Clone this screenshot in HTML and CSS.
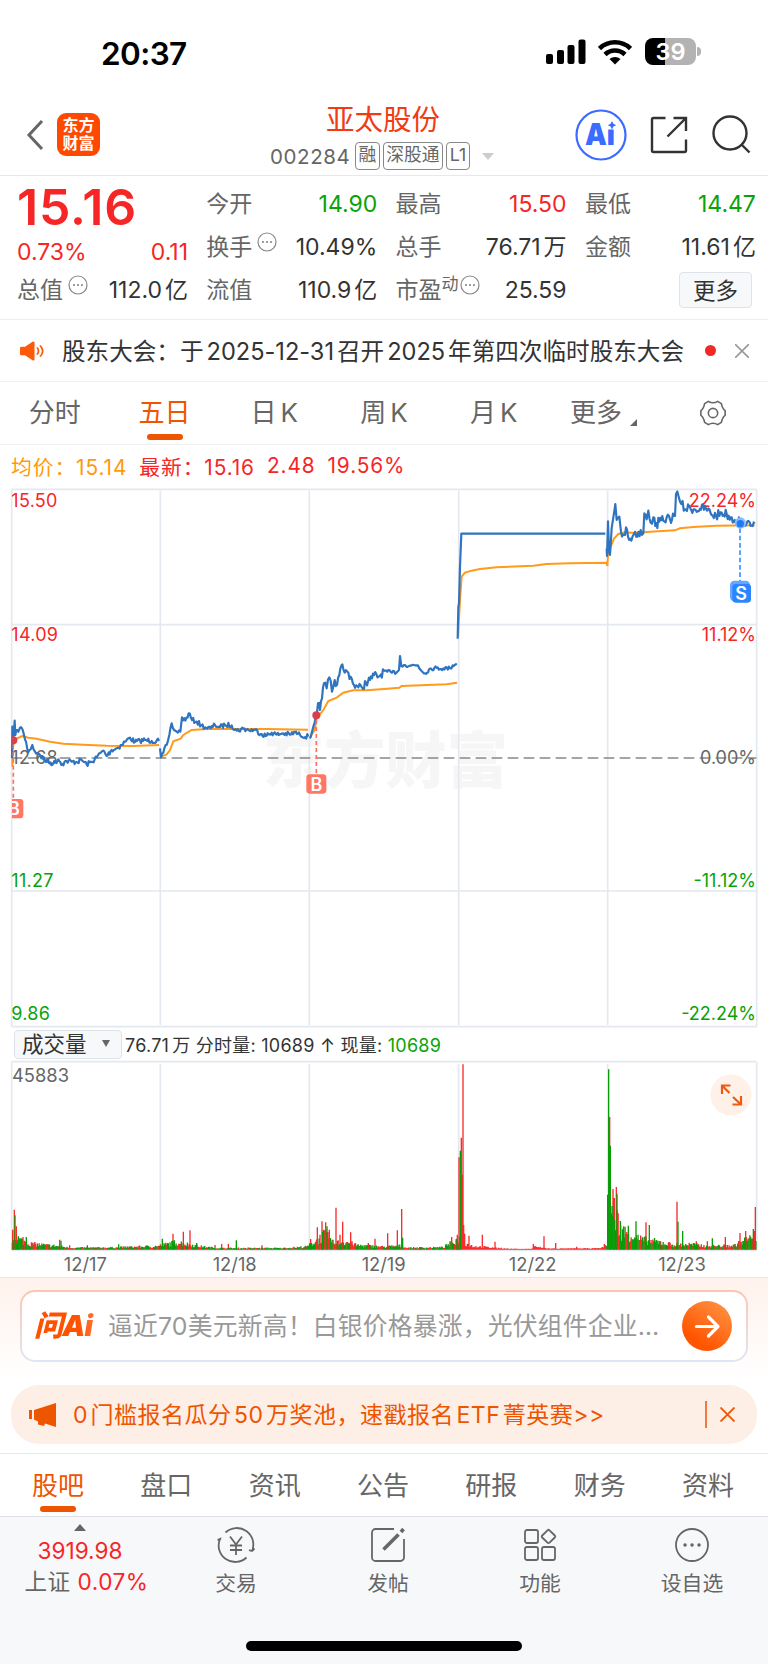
FILE: index.html
```html
<!DOCTYPE html>
<html lang="zh-CN">
<head>
  <meta charset="UTF-8" />
  <meta name="viewport" content="width=device-width, initial-scale=1.0"/>
  <title>亚太股份 002284</title>
  <link rel="stylesheet" href="styles.css">
</head>
<body>
  <!-- Status bar -->
  <div class="status">
    <span class="time">20:37</span>
    <div class="status-icons">
      <svg width="40" height="26" viewBox="0 0 40 26">
        <rect x="0" y="15" width="7" height="10" rx="2"/>
        <rect x="11" y="11" width="7" height="14" rx="2"/>
        <rect x="21.500" y="6" width="7" height="19" rx="2"/>
        <rect x="32.500" y="0.500" width="7" height="24.500" rx="2"/>
      </svg>
      <svg class="wifi" width="34" height="26" viewBox="0 0 34 26">
        <path d="M1.500 9.500a22.500 22.500 0 0 1 31 0M7 15.500a14.500 14.500 0 0 1 20 0" fill="none" stroke="#000" stroke-width="4.600"/>
        <path d="M11.500 20a8.500 8.500 0 0 1 11 0L17 25.500z"/>
      </svg>
      <div class="battery"><span>39</span></div>
      <i class="nub"></i>
    </div>
  </div>

  <!-- Header -->
  <header>
    <svg class="back" width="18" height="32" viewBox="0 0 18 32"><path d="M16 2L3 16l13 14" fill="none" stroke="#666" stroke-width="3"/></svg>
    <div class="logo">东方<br>财富</div>
    <div class="title">
      <h1>亚太股份</h1>
      <p><span class="code">002284</span><b>融</b><b>深股通</b><b>L1</b><i></i></p>
    </div>
    <div class="tools">
      <svg width="52" height="52" viewBox="0 0 52 52">
        <circle cx="26" cy="26" r="24.500" fill="#fff" stroke="#3b6bff" stroke-width="2.200"/>
        <text class="ai" x="10" y="36" textLength="30" lengthAdjust="spacingAndGlyphs">Ai</text>
        <path d="M31.500 10h12v10.500h-12z" fill="#fff"/>
        <path d="M37 12l1.400 2.800 2.800 1.400-2.800 1.400-1.400 2.800-1.400-2.800-2.800-1.400 2.800-1.400z" fill="#3b6bff"/>
      </svg>
      <svg width="38" height="38" viewBox="0 0 38 38" fill="none" stroke="#333" stroke-width="2.400">
        <path d="M15.500 2H3.500A1.500 1.500 0 0 0 2 3.500v31A1.500 1.500 0 0 0 3.500 36h31a1.500 1.500 0 0 0 1.500-1.500V23.500M23.500 2H36v13M36 2L17.500 20.500"/>
      </svg>
      <svg width="40" height="40" viewBox="0 0 40 40" fill="none" stroke="#333" stroke-width="2.400">
        <circle cx="19" cy="18" r="16.500"/><path d="M30.500 29.500l8 8"/>
      </svg>
    </div>
  </header>

  <!-- Quote -->
  <section class="quote">
    <div class="col first">
      <div class="price">15.16</div>
      <div class="row chg"><span class="red">0.73%</span><span class="red">0.11</span></div>
      <div class="row"><label>总值</label><svg class="more-dot" viewBox="0 0 20 20"><use href="#dots"/></svg><span>112.0<em>亿</em></span></div>
    </div>
    <div class="col">
      <div class="row"><label>今开</label><span class="green">14.90</span></div>
      <div class="row"><label>换手</label><svg class="more-dot" viewBox="0 0 20 20"><use href="#dots"/></svg><span>10.49%</span></div>
      <div class="row"><label>流值</label><span>110.9<em>亿</em></span></div>
    </div>
    <div class="col">
      <div class="row"><label>最高</label><span class="red">15.50</span></div>
      <div class="row"><label>总手</label><span>76.71<em>万</em></span></div>
      <div class="row"><label>市盈<sup>动</sup></label><svg class="more-dot near" viewBox="0 0 20 20"><use href="#dots"/></svg><span>25.59</span></div>
    </div>
    <div class="col">
      <div class="row"><label>最低</label><span class="green">14.47</span></div>
      <div class="row"><label>金额</label><span>11.61<em>亿</em></span></div>
      <div class="row"><button>更多</button></div>
    </div>
  </section>

  <svg class="defs" width="0" height="0">
    <g id="dots"><circle cx="10" cy="10" r="9" fill="none" stroke="#888" stroke-width="1.200"/>
    <circle cx="6" cy="10" r="1.100" fill="#888"/><circle cx="10" cy="10" r="1.100" fill="#888"/><circle cx="14" cy="10" r="1.100" fill="#888"/></g>
  </svg>

  <!-- Notice -->
  <div class="notice">
    <svg width="24" height="20" viewBox="0 0 24 28" preserveAspectRatio="none">
      <path d="M0 9.500Q0 8 1.500 8H5l7.500-7Q14.500 0 14.500 2v24q0 2-2 1L5 20H1.500Q0 20 0 18.500z" fill="#ff5a0a"/>
      <path d="M17 9q3 5 0 10M20 6q5.500 8 0 16" fill="none" stroke="#ff5a0a" stroke-width="1.800"/>
    </svg>
    <p>股东大会：于<span>2025-12-31</span>召开<span>2025</span>年第四次临时股东大会</p>
    <i class="dot"></i>
    <svg class="close" width="14" height="14" viewBox="0 0 14 14"><path d="M0 0l14 14M14 0L0 14" stroke="#999" stroke-width="1.600"/></svg>
  </div>

  <!-- Period tabs -->
  <nav class="periods">
    <a>分时</a><a class="active">五日</a><a>日<s>K</s></a><a>周<s>K</s></a><a>月<s>K</s></a><a class="tri">更多</a>
    <a><svg width="30" height="28" viewBox="0 0 30 30" fill="none" stroke="#666" stroke-width="1.700">
      <path d="M10 2.500Q15 5.500 20 2.500L24 5q1 5.500 4 7.500v5q-3 2-4 7.500l-4 2.500q-5-3-10 0L6 25q-1-5.500-4-7.500v-5Q5 10.500 6 5z" stroke-linejoin="round"/><circle cx="15" cy="15" r="5"/>
    </svg></a>
  </nav>

  <div class="legend">
    <span class="avg">均价：15.14</span><span class="red">最新：15.16</span><span class="red">2.48</span><span class="red">19.56%</span>
  </div>

  <!-- Price chart -->
  <svg class="chart" id="priceChart" width="768" height="549" viewBox="0 0 2304 1647">
    <text class="mark" x="788" y="908" textLength="736">东方财富</text>
    <g class="grid">
      <path d="M35 28H2269M35 434H2269M35 1233H2269M35 1640H2269M35 28V1640M2270 28V1640"/>
      <path d="M481 32V1635M928 32V1635M1376 32V1635M1823 32V1635"/>
    </g>
    <path d="M35 834H2269" stroke="#888" stroke-width="5" stroke-dasharray="32 16"/>
    <g class="labels">
      <text class="r" x="34" y="80">15.50</text>
      <text class="r" x="34" y="483">14.09</text>
      <text x="34" y="851">12.68</text>
      <text class="g" x="34" y="1221">11.27</text>
      <text class="g" x="34" y="1621">9.86</text>
    </g>
    <g class="labels end">
      <text class="r" x="2268" y="80">22.24%</text>
      <text class="r" x="2268" y="483">11.12%</text>
      <text x="2268" y="851">0.00%</text>
      <text class="g" x="2268" y="1221">-11.12%</text>
      <text class="g" x="2268" y="1621">-22.24%</text>
    </g>
    <g id="avgLines" fill="none" stroke="#ff9a1a" stroke-width="6"></g>
    <g id="priceLines" fill="none" stroke="#2f74c0" stroke-width="6.500" stroke-linejoin="round"></g>
    <svg x="36" y="0" width="2268" height="1647" viewBox="36 0 2268 1647">
      <circle cx="40" cy="781" r="12" fill="#d8404a"/>
      <path d="M40 794V958" stroke="#ff6f61" stroke-width="5" stroke-dasharray="12 9"/>
      <rect x="10" y="957" width="60" height="58" rx="10" fill="#ff7566"/>
      <text class="flag" x="42" y="1005">B</text>
    </svg>
    <circle cx="949" cy="706" r="12" fill="#d8404a"/>
    <path d="M949 720V884" stroke="#ff6f61" stroke-width="5" stroke-dasharray="12 9"/>
    <rect x="919" y="883" width="60" height="58" rx="10" fill="#ff7566"/>
    <text class="flag" x="949" y="932">B</text>
    <path d="M2220 145V305" stroke="#5aa3ff" stroke-width="6" stroke-dasharray="14 8"/>
    <circle cx="2221" cy="129" r="17" fill="#8abaff"/><circle cx="2221" cy="131" r="11" fill="#1e7bf5"/>
    <rect x="2190" y="302" width="60" height="62" rx="13" fill="#65a7ff"/>
    <rect x="2197" y="312" width="56" height="56" rx="10" fill="#2b85ff"/>
    <text class="flag" x="2223" y="361">S</text>
  </svg>

  <!-- Volume -->
  <div class="vol-head">
    <button>成交量<i></i></button>
    <span>76.71<em>万</em> 分时量: 10689 ↑ 现量: <b class="green">10689</b></span>
  </div>
  <div class="vol">
    <svg class="chart" width="768" height="217" viewBox="0 0 2304 651">
      <g class="grid">
        <path d="M35 5H2269M35 571H2269M35 5V571M2270 5V571"/>
        <path d="M481 12V568M928 12V568M1376 12V568M1823 12V568"/>
      </g>
      <text class="max" x="36" y="65">45883</text>
      <path id="volUp" stroke="#f72c2c" stroke-width="4" fill="none"/>
      <path id="volDown" stroke="#089c08" stroke-width="4" fill="none"/>
      <g class="dates">
        <text x="256" y="633">12/17</text><text x="704" y="633">12/18</text><text x="1151" y="633">12/19</text>
        <text x="1598" y="633">12/22</text><text x="2046" y="633">12/23</text>
      </g>
    </svg>
    <svg class="expand" width="42" height="42" viewBox="0 0 42 42">
      <circle cx="21" cy="21" r="20.500" fill="#fff0e8"/>
      <path d="M12 20v-8.500h8.500M12 11.500l7.500 7.500M22.500 30.500H31V22M31 30.500l-8-7.500" fill="none" stroke="#ee5a10" stroke-width="2.200"/>
    </svg>
  </div>

  <!-- Ask AI -->
  <section class="ask">
    <div class="ask-box">
      <strong>问Ai</strong>
      <p>逼近70美元新高！白银价格暴涨，光伏组件企业…</p>
      <svg width="50" height="50" viewBox="0 0 50 50">
        <defs><linearGradient id="og" x1="0.300" y1="0.800" x2="0.800" y2="0.100"><stop offset="0" stop-color="#ff5500"/><stop offset="1" stop-color="#ff8c3c"/></linearGradient></defs>
        <circle cx="25" cy="25" r="25" fill="url(#og)"/>
        <path d="M14.500 25.500h21M26.500 16l9.500 9.500-9.500 9.500" fill="none" stroke="#fff" stroke-width="3.200" stroke-linecap="round" stroke-linejoin="round"/>
      </svg>
    </div>
  </section>

  <div class="promo">
    <svg width="28" height="24" viewBox="0 0 28 24"><path d="M0 7h3v9H0zM5 7L27 0v24l-11-3.500-1 2.500-6-1.500v-3l-4-2z" fill="#ee5500"/></svg>
    <p>0<u></u>门槛报名瓜分<u></u>50<u></u>万奖池，速戳报名<u></u>ETF<u></u>菁英赛&gt;&gt;</p>
    <i></i>
    <svg width="15" height="15" viewBox="0 0 15 15"><path d="M.5.5l14 14M14.500.5l-14 14" stroke="#ee5500" stroke-width="1.800"/></svg>
  </div>

  <nav class="sections">
    <a class="active">股吧</a><a>盘口</a><a>资讯</a><a>公告</a><a>研报</a><a>财务</a><a>资料</a>
  </nav>

  <!-- Bottom bar -->
  <footer>
    <div class="bar">
      <div class="index">
        <i></i>
        <span class="red">3919.98</span>
        <p>上证 <span class="red">0.07%</span></p>
      </div>
      <div class="item">
        <svg viewBox="0 0 40 36"><path d="M9.500 5.500A16.500 16.500 0 0 1 36 24l2.500-2.500M36 24l-3-.8M30.500 30.500A16.500 16.500 0 0 1 4 12L1.500 13M4 12l1 .5M14 9.500l6 8 6-8M20 17.500V28M14 18.500h12M14 23h12"/></svg>
        <span>交易</span>
      </div>
      <div class="item">
        <svg viewBox="0 0 40 36"><path d="M26 2H7.500A3.500 3.500 0 0 0 4 5.500v25A3.500 3.500 0 0 0 7.500 34h25a3.500 3.500 0 0 0 3.500-3.500V12"/><path d="M15.500 22.500L30.500 7.500" stroke-width="3.600"/><path d="M33 5l2.500-3" stroke-width="3.600"/></svg>
        <span>发帖</span>
      </div>
      <div class="item">
        <svg viewBox="0 0 40 36"><rect x="5" y="3" width="13" height="13" rx="2"/><rect x="5" y="20" width="13" height="13" rx="2"/><rect x="22" y="20" width="13" height="13" rx="2"/><path d="M27.500 3.300q1-1 2 0l5.300 5.200q1 1 0 2l-5.300 5.200q-1 1-2 0l-5.300-5.200q-1-1 0-2z"/></svg>
        <span>功能</span>
      </div>
      <div class="item">
        <svg viewBox="0 0 40 36"><circle cx="20" cy="18" r="16"/><path d="M13 18h.1M20 18h.1M27 18h.1" stroke-width="3.400" stroke-linecap="round"/></svg>
        <span>设自选</span>
      </div>
    </div>
    <div class="home"></div>
  </footer>

  <script>
// fixed seed so that the chart looks the same on every load
let seed = 7;
function rand() {
  seed = (seed * 16807) % 2147483647;
  return seed / 2147483647;
}

const NS = "http://www.w3.org/2000/svg";

function line(parent, points, noise) {
  let d = "M" + points[0][0] + " " + points[0][1];
  for (let i = 1; i < points.length; i++) {
    const [x0, y0] = points[i - 1];
    const [x1, y1] = points[i];
    const n = noise ? Math.floor((x1 - x0) / 3) : 0;
    for (let k = 1; k < n; k++) {
      const y = y0 + (y1 - y0) * k / n + (rand() - 0.5) * noise;
      d += "L" + (x0 + (x1 - x0) * k / n).toFixed(1) + " " + y.toFixed(1);
    }
    d += "L" + x1 + " " + y1;
  }
  const path = document.createElementNS(NS, "path");
  path.setAttribute("d", d);
  document.getElementById(parent).appendChild(path);
}

// average price
line("avgLines", [[37,860],[38,800],[46,778],[66,768],[85,773],[110,776],[150,785],[190,791],[250,794],[320,797],[400,798],[477,795]]);
line("avgLines", [[483,830],[500,823],[510,810],[520,784],[542,776],[550,765],[575,750],[620,747],[700,747],[800,747],[924,749]]);
line("avgLines", [[932,768],[944,750],[950,715],[970,690],[985,663],[1010,653],[1030,638],[1060,631],[1100,631],[1152,627],[1198,623],[1205,618],[1300,614],[1340,613],[1371,608]]);
line("avgLines", [[1374,470],[1380,360],[1385,290],[1395,278],[1415,272],[1440,267],[1490,262],[1600,257],[1640,252],[1710,250],[1820,248],[1822,258]]);
line("avgLines", [[1822,258],[1824,225],[1832,200],[1842,176],[1855,162],[1875,157],[1905,159],[1950,155],[2025,151],[2040,145],[2080,141],[2150,137],[2264,136]]);

// last price, one polyline per day
line("priceLines", [[36,835],[37,740],[40,775],[44,722],[46,765],[52,750],[58,748],[64,742],[72,765],[78,785],[84,818],[92,808],[97,795],[105,815],[118,822],[130,838],[145,846],[160,851],[175,838],[187,852],[200,843],[215,845],[230,846],[245,840],[260,853],[275,846],[290,832],[302,818],[310,812],[320,828],[335,810],[350,805],[365,795],[375,785],[390,773],[405,786],[420,782],[435,780],[455,783],[477,783]], 15);
line("priceLines", [[480,805],[483,832],[490,818],[500,795],[508,765],[515,730],[522,750],[530,755],[541,755],[546,712],[556,722],[566,700],[576,720],[590,725],[604,736],[615,742],[632,745],[645,735],[660,741],[675,735],[695,736],[710,752],[730,746],[745,750],[765,750],[785,762],[800,767],[815,758],[830,764],[850,760],[870,764],[885,757],[900,765],[925,770]], 15);
line("priceLines", [[929,775],[940,740],[948,705],[954,670],[960,690],[966,655],[972,610],[980,625],[988,592],[996,635],[1004,600],[1011,615],[1018,585],[1027,553],[1034,578],[1042,575],[1052,590],[1062,615],[1075,622],[1086,623],[1098,608],[1110,600],[1122,585],[1136,590],[1152,575]], 24);
line("priceLines", [[1152,572],[1162,575],[1176,578],[1192,575],[1197,570],[1200,528],[1204,558],[1215,555],[1235,556],[1254,556],[1264,572],[1275,580],[1290,566],[1310,564],[1330,565],[1350,565],[1358,556],[1370,550]], 12);
line("priceLines", [[1373,476],[1375,380],[1377,370],[1380,260],[1384,161],[1816,161]]);
line("priceLines", [[1820,205],[1821,228],[1824,124],[1827,215],[1830,225],[1835,145],[1840,112],[1846,72],[1850,120],[1858,110],[1863,155],[1872,165],[1878,142],[1884,170],[1894,182],[1902,162],[1912,170],[1922,150],[1930,160],[1933,100],[1940,118],[1945,92],[1952,128],[1960,112],[1966,138],[1978,125],[1990,122],[2000,112],[2010,118],[2022,108],[2025,108],[2028,42],[2036,50],[2044,72],[2055,88],[2070,82],[2084,88],[2100,86],[2118,86],[2132,100],[2148,108],[2165,98],[2180,102],[2192,112],[2204,120],[2220,122]], 30);
line("priceLines", [[2221,128],[2240,130],[2264,131]], 16);

// volume: envelope of the usual height plus single spikes [x, height, up]
const envelope = [[36,40],[60,38],[90,22],[140,16],[180,12],[210,6],[340,7],[400,10],[470,12],[500,20],[530,28],[570,18],[610,10],[650,5],[850,5],[920,10],[950,35],[975,60],[1000,25],[1040,30],[1070,16],[1150,10],[1200,14],[1220,6],[1330,8],[1360,30],[1378,40],[1395,24],[1420,12],[1500,5],[1530,2],[1595,2],[1602,10],[1650,3],[1800,4],[1821,15],[1824,170],[1850,130],[1860,75],[1890,60],[1925,38],[1980,28],[2020,18],[2070,20],[2120,13],[2200,14],[2235,35],[2268,55]];
const spikes = [[38,60,1],[43,120,1],[45,103,0],[49,70,1],[55,40,0],[69,38,1],[79,38,0],[179,30,1],[183,27,0],[209,13,1],[262,13,0],[356,16,0],[487,33,0],[519,48,1],[523,27,0],[550,54,1],[570,58,1],[590,20,0],[645,14,1],[665,17,1],[685,17,1],[709,28,0],[786,13,1],[932,32,1],[952,67,1],[966,85,1],[977,82,1],[981,70,0],[988,60,1],[1008,126,1],[1028,84,1],[1020,45,1],[1052,52,1],[1105,20,1],[1125,33,1],[1163,49,1],[1192,58,1],[1205,122,1],[1208,36,0],[1355,38,1],[1372,45,1],[1377,277,1],[1381,297,0],[1384,336,1],[1386,225,1],[1389,556,1],[1391,74,1],[1394,48,1],[1407,42,1],[1447,45,1],[1485,24,1],[1600,17,1],[1632,40,1],[1667,20,1],[1730,9,1],[1813,17,1],[1823,165,0],[1826,541,0],[1829,398,1],[1831,312,0],[1839,182,1],[1843,155,1],[1849,188,1],[1851,168,0],[1854,110,1],[1861,86,0],[1871,70,1],[1885,72,0],[1908,85,0],[1938,82,1],[1948,74,0],[2031,144,1],[2034,84,0],[2048,56,0],[2089,25,1],[2122,25,1],[2137,34,0],[2176,38,1],[2220,50,1],[2237,56,1],[2260,62,0],[2266,128,1]];

function envAt(x) {
  for (let i = 1; i < envelope.length; i++) {
    if (x <= envelope[i][0]) {
      const [x0, h0] = envelope[i - 1];
      const [x1, h1] = envelope[i];
      return h0 + (h1 - h0) * (x - x0) / (x1 - x0);
    }
  }
  return 20;
}

let up = "", down = "";
function bar(x, h, isUp) {
  const s = "M" + x.toFixed(1) + " 569v-" + h.toFixed(1);
  if (isUp) up += s; else down += s;
}
for (let x = 37; x < 2268; x += 2.6) {
  const h = envAt(x) * (0.35 + rand() * 0.75) + 1;
  const pUp = x > 1376 && x < 1820 ? 1 : 0.52;
  bar(x, h, rand() < pUp);
}
spikes.forEach(s => bar(s[0], s[1], s[2]));
document.getElementById("volUp").setAttribute("d", up);
document.getElementById("volDown").setAttribute("d", down);
  </script>
</body>
</html>
```

FILE: styles.css
```css
* {
  margin: 0;
  padding: 0;
  box-sizing: border-box;
}
body {
  width: 768px;
  font-family: Inter, "Noto Sans CJK SC", sans-serif;
  font-size: 23px;
  color: #333;
  background: #fff;
}
svg {
  display: block;
  flex: none;
}
p, span, label, a, button {
  white-space: nowrap;
}
em, i {
  font-style: normal;
}
em {
  margin-left: 3px;
}
button {
  font-family: inherit;
  color: #333;
  background: #f7f8fa;
  border: 1.5px solid #dfe3ea;
  border-radius: 4px;
}
.defs {
  position: absolute;
}
.red {
  color: #f72626;
}
.green {
  color: #08a308;
}

/* status bar */
.status {
  height: 96px;
  padding: 33px 67px 0 101px;
  display: flex;
  justify-content: space-between;
}
.time {
  font-size: 31.5px;
  font-weight: 600;
  line-height: 41px;
  letter-spacing: -0.6px;
  color: #000;
}
.status-icons {
  display: flex;
  height: 27px;
  margin-top: 5px;
  align-items: center;
}
.wifi {
  margin: 0 13px 0 12px;
}
.battery {
  width: 51px;
  height: 27px;
  border-radius: 8px;
  background: linear-gradient(to right, #000 39%, #b3b3b3 39%);
  color: #fff;
  font-size: 23.5px;
  font-weight: 600;
  line-height: 27px;
  text-align: center;
}
.nub {
  width: 4px;
  height: 9px;
  margin-left: 1px;
  background: #b3b3b3;
  border-radius: 0 4px 4px 0;
}

/* header */
header {
  height: 80px;
  padding-bottom: 2px;
  display: flex;
  align-items: center;
  border-bottom: 1.5px solid #e8e8e8;
}
.back {
  margin-left: 26px;
}
.logo {
  width: 43px;
  height: 43px;
  margin-left: 13px;
  padding-top: 4px;
  border-radius: 9px;
  background: #ff4800;
  color: #fff;
  font-size: 16px;
  line-height: 17.5px;
  font-weight: 700;
  text-align: center;
}
.title {
  flex: 1;
  margin-left: 170px;
  padding-top: 4px;
}
.title h1 {
  font-size: 28.5px;
  line-height: 36px;
  font-weight: 400;
  color: #f03c14;
  padding-left: 56px;
}
.title p {
  display: flex;
  align-items: center;
  height: 30px;
  margin-top: 3px;
  color: #666;
}
.title .code {
  font-size: 20.5px;
  letter-spacing: 0.6px;
  width: 85px;
}
.title b {
  height: 28px;
  margin-right: 3px;
  padding: 0 2.5px;
  border: 1.5px solid #888;
  border-radius: 4px;
  font-size: 17.8px;
  line-height: 24px;
  font-weight: 400;
}
.title i {
  margin-left: 9px;
  border: 6.5px solid transparent;
  border-top: 7px solid #ccc;
  border-bottom: 0;
}
.tools {
  display: flex;
  align-items: center;
  gap: 23px;
  margin-right: 17px;
}
.ai {
  font-size: 30px;
  font-weight: 900;
  fill: #3b6bff;
}

/* quote */
.quote {
  height: 144px;
  padding: 6px 12px 0 17px;
  display: grid;
  grid-template-columns: repeat(4, 171px);
  column-gap: 18.300px;
  border-bottom: 1.5px solid #eee;
}
.row {
  height: 43px;
  display: flex;
  align-items: center;
}
.row label {
  padding-bottom: 4px;
  color: #666;
}
.row em {
  display: inline-block;
  line-height: 20px;
  padding-bottom: 1px;
}
.row > span:last-child {
  margin-left: auto;
}
.row button {
  width: 73px;
  height: 36px;
  margin-left: auto;
  margin-right: 4px;
  padding-bottom: 2px;
  font-size: 22.5px;
}
.row sup {
  font-size: 17px;
  line-height: 0;
  vertical-align: 8px;
}
.price {
  height: 49px;
  font-size: 50px;
  line-height: 51px;
  letter-spacing: 0.8px;
  font-weight: 600;
  color: #f72626;
}
.row.chg {
  height: 37px;
  padding-top: 5px;
}
.more-dot {
  width: 20px;
  height: 20px;
  margin: -9px 0 0 5px;
}
.more-dot.near {
  margin-left: 1px;
}

/* notice */
.notice {
  height: 62px;
  padding: 0 19px 0 20px;
  display: flex;
  align-items: center;
  border-bottom: 1.5px solid #f0f0f0;
}
.notice p {
  width: 621px;
  margin-left: 18px;
  padding-bottom: 2px;
  font-size: 23.6px;
}
.notice p span {
  letter-spacing: -0.02px;
  margin: 0 3px;
}
.dot {
  width: 11px;
  height: 11px;
  margin-left: 22px;
  border-radius: 50%;
  background: #f72626;
}
.close {
  margin-left: auto;
}

/* tabs */
.periods, .sections {
  display: flex;
  justify-content: space-between;
  font-size: 26px;
  color: #666;
}
.periods {
  height: 63px;
  line-height: 61px;
  border-bottom: 1.5px solid #f0f0f0;
}
.periods a {
  flex: 1;
  text-align: center;
}
.periods s {
  text-decoration: none;
  margin-left: 4px;
}
.periods svg {
  margin: 17px auto 0;
}
.active {
  color: #ee5500;
  position: relative;
}
.active::after {
  content: "";
  position: absolute;
  left: 50%;
  bottom: 4px;
  width: 36px;
  height: 6px;
  margin-left: -18px;
  border-radius: 3px;
  background: #ee5500;
}
.tri::after {
  content: "";
  display: inline-block;
  margin-left: 8px;
  border-left: 7px solid transparent;
  border-bottom: 7px solid #666;
  vertical-align: -4px;
}

.legend {
  height: 35px;
  padding: 6px 0 0 11px;
  display: flex;
  align-items: center;
  gap: 12px;
  font-size: 20.8px;
  letter-spacing: 0.9px;
}
.avg {
  color: #ff9a0a;
}

/* charts */
.grid {
  fill: none;
  stroke: #e4e8ef;
  stroke-width: 5;
}
.mark {
  font-size: 184px;
  font-weight: 900;
  fill: #f6f6f6;
}
.labels {
  font-size: 54px;
  letter-spacing: 0.8px;
  fill: #666;
}
.end {
  letter-spacing: 0;
  text-anchor: end;
}
.labels .r {
  fill: #f72626;
}
.labels .g {
  fill: #08a308;
}
.flag {
  font-size: 54px;
  font-weight: 600;
  fill: #fff;
  text-anchor: middle;
}
.vol-head {
  height: 31px;
  padding-left: 14px;
  display: flex;
  align-items: center;
  font-size: 18px;
  letter-spacing: 0.25px;
}
.vol-head button {
  width: 108px;
  height: 29px;
  padding-left: 7px;
  padding-bottom: 2px;
  font-size: 21.5px;
  line-height: 24px;
  display: flex;
  align-items: center;
}
.vol-head button i {
  margin-left: 15px;
  border: 4px solid transparent;
  border-top: 7px solid #666;
  border-bottom: 0;
}
.vol-head span {
  margin-left: 3px;
  padding-bottom: 2px;
}
.vol-head b {
  font-weight: 400;
}
.vol {
  position: relative;
  border-bottom: 1.5px solid #e6e6e6;
}
.max, .dates {
  font-size: 55px;
  fill: #666;
}
.dates {
  text-anchor: middle;
}
.expand {
  position: absolute;
  top: 14px;
  left: 710px;
}

/* ask ai */
.ask {
  height: 107px;
  padding: 12px 20px 0;
  background: linear-gradient(#fff2ec, #fff 95%);
}
.ask-box {
  height: 72px;
  padding: 0 14px 1px;
  display: flex;
  align-items: center;
  border: 2px solid transparent;
  border-radius: 15px;
  background: linear-gradient(#fff, #fff) padding-box, linear-gradient(#ffc3b5, #dfe5f8) border-box;
}
.ask-box strong {
  width: 75px;
  margin: -5px 0 0 -3px;
  padding-left: 1px;
  font-size: 29px;
  font-weight: 900;
  font-style: italic;
  letter-spacing: -0.8px;
  background: linear-gradient(to right, #ff5200 60%, #ff9060);
  -webkit-background-clip: text;
  background-clip: text;
  color: transparent;
}
.ask-box p {
  flex: 1;
  padding-bottom: 3px;
  font-size: 24.8px;
  letter-spacing: 0.2px;
  color: #999;
}

.promo {
  height: 59px;
  margin: 0 11px 9px;
  padding: 0 22px 0 18px;
  display: flex;
  align-items: center;
  border-radius: 28px;
  background: #fdeee6;
  color: #ee5500;
}
.promo p {
  flex: 1;
  margin-left: 16px;
  padding-bottom: 4px;
  font-size: 23px;
  letter-spacing: 0.5px;
}
.promo u {
  display: inline-block;
  width: 2.5px;
}
.promo i {
  width: 2px;
  height: 27px;
  margin-right: 13px;
  background: #f07a3c;
}
.sections {
  height: 64px;
  padding: 0 34px 0 32px;
  line-height: 63px;
  border-top: 1.5px solid #e8e8e8;
  border-bottom: 1.5px solid #dcdfe3;
}

/* bottom bar */
footer {
  height: 147px;
  background: #f7f8fa;
}
.bar {
  height: 124px;
  display: flex;
}
.index {
  width: 160px;
  display: flex;
  flex-direction: column;
  align-items: center;
  font-size: 22.6px;
  color: #666;
}
.index i {
  margin: 7px 0 5px;
  border: 6.5px solid transparent;
  border-bottom: 7px solid #666;
  border-top: 0;
}
.index > span {
  line-height: 30px;
}
.index p {
  padding-left: 13px;
  line-height: 32px;
  letter-spacing: 0.5px;
}
.item {
  width: 152px;
  display: flex;
  flex-direction: column;
  align-items: center;
  font-size: 20.8px;
  color: #666;
}
.item svg {
  width: 40px;
  height: 36px;
  margin: 10px 0 4px;
  fill: none;
  stroke: #666;
  stroke-width: 1.8;
}
.home {
  width: 276px;
  height: 10px;
  margin: 0 auto;
  border-radius: 5px;
  background: #000;
}
```
